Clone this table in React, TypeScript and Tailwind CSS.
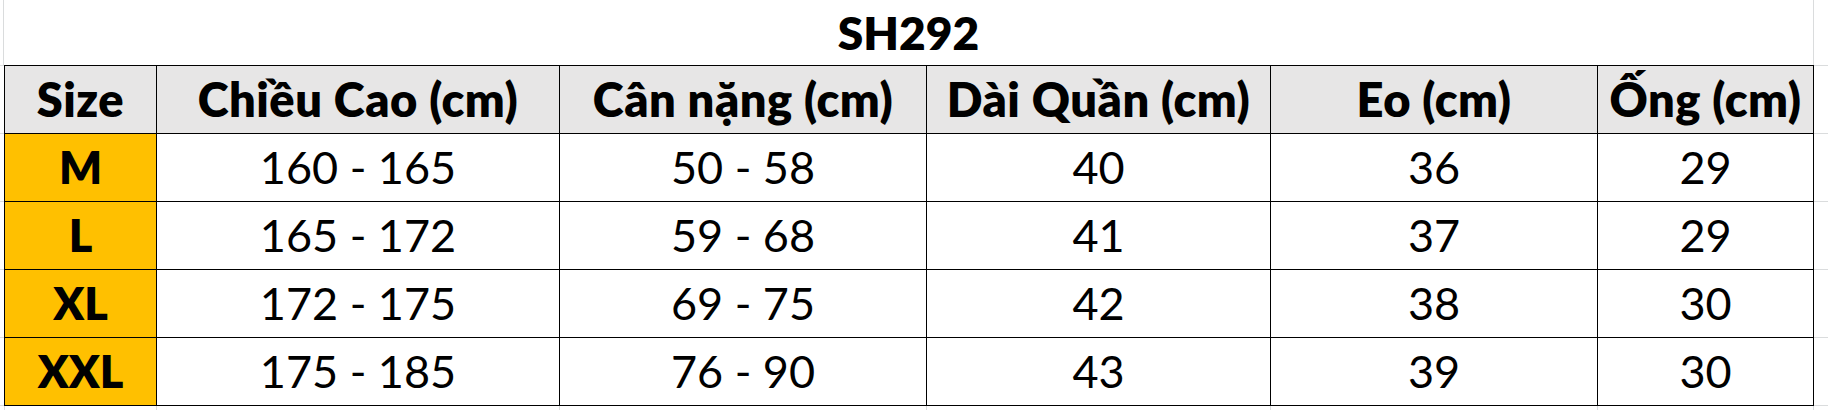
import React from "react";

const headers = ["Size", "Chiều Cao (cm)", "Cân nặng (cm)", "Dài Quần (cm)", "Eo (cm)", "Ống (cm)"];

const rows: string[][] = [
  ["M", "160 - 165", "50 - 58", "40", "36", "29"],
  ["L", "165 - 172", "59 - 68", "41", "37", "29"],
  ["XL", "172 - 175", "69 - 75", "42", "38", "30"],
  ["XXL", "175 - 185", "76 - 90", "43", "39", "30"],
];

const cols = "grid grid-cols-[152px_403px_367px_344px_327px_216px]";

export default function App() {
  return (
    <div className="w-[1828px] h-[410px] bg-white flex font-['Lato',sans-serif] text-black overflow-hidden">
      {/* left gridline stub */}
      <div className="w-[4px] flex flex-col">
        <div className="h-[65px] border-r border-[#dadcdd]" />
        {[0, 1, 2, 3, 4].map((i) => (
          <div key={i} className="h-[68px] border-t border-[#dadcdd]" />
        ))}
        <div className="flex-1 border-t border-[#dadcdd]" />
      </div>

      {/* sheet */}
      <div className="w-[1810px] flex flex-col">
        <div className="h-[65px] border-r border-[#dadcdd] flex items-center justify-center">
          <span className="text-[46px] leading-none font-extrabold">SH292</span>
        </div>

        <div className="border-l border-t border-black">
          <div className={cols}>
            {headers.map((h) => (
              <div
                key={h}
                className="h-[68px] bg-[#e7e6e6] border-r border-b border-black flex items-center justify-center text-[47px] leading-none font-extrabold tracking-[0.5px] whitespace-nowrap"
              >
                {h}
              </div>
            ))}
          </div>
          {rows.map((r) => (
            <div key={r[0]} className={cols}>
              {r.map((c, j) => (
                <div
                  key={j}
                  className={
                    j === 0
                      ? "h-[68px] bg-[#ffc000] border-r border-b border-black flex items-center justify-center text-[45px] leading-none font-extrabold"
                      : "h-[68px] bg-white border-r border-b border-black flex items-center justify-center text-[45px] leading-none"
                  }
                >
                  {c}
                </div>
              ))}
            </div>
          ))}
        </div>

        {/* gridlines below the table */}
        <div className={cols + " flex-1 border-l border-[#dadcdd]"}>
          {headers.map((h) => (
            <div key={h} className="border-r border-[#dadcdd]" />
          ))}
        </div>
      </div>

      {/* right gridline stub */}
      <div className="flex-1 flex flex-col">
        <div className="h-[65px]" />
        {[0, 1, 2, 3, 4].map((i) => (
          <div key={i} className="h-[68px] border-t border-[#dadcdd]" />
        ))}
        <div className="flex-1 border-t border-[#dadcdd]" />
      </div>
    </div>
  );
}
